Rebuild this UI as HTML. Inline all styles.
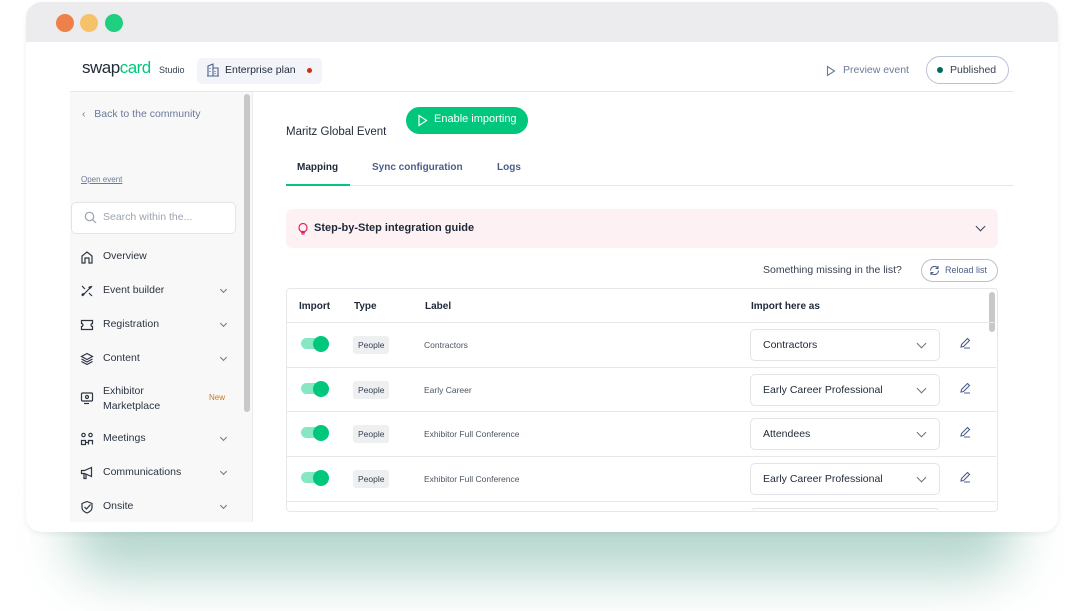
<!DOCTYPE html>
<html><head><style>
*{box-sizing:border-box;margin:0;padding:0}
body{width:1085px;height:611px;background:#fff;font-family:"Liberation Sans",sans-serif;position:relative;overflow:hidden;color:#1f2937}
.shadow{position:absolute;left:70px;top:480px;width:945px;height:95px;border-radius:40px;background:#a9cfc5;filter:blur(26px);opacity:.85}
.win{position:absolute;left:26px;top:2px;width:1032px;height:530px;background:#fff;border-radius:16px;overflow:hidden;box-shadow:0 2px 6px rgba(0,0,0,.06)}
.bar{height:40px;background:#ececee}
.dot{position:absolute;top:12px;width:18px;height:18px;border-radius:50%}
.a{position:absolute}
.t{position:absolute;white-space:nowrap}
.side{position:absolute;left:44px;top:90px;width:182px;height:430px;background:#f8f8f9}
.nav{position:absolute;left:77px;font-size:10.5px;color:#2b3441}
.chev{position:absolute;left:195px;width:5px;height:5px;border-right:1.1px solid #6b7280;border-bottom:1.1px solid #6b7280;transform:rotate(45deg)}
.row{position:absolute;left:260px;width:710px;border-top:1px solid #e5e7eb;height:45px}
.tog{position:absolute;left:15px;top:15px;width:26px;height:11px;border-radius:6px;background:#86e8c2}
.tog:after{content:"";position:absolute;right:-2px;top:-2.5px;width:16px;height:16px;border-radius:50%;background:#00c77c}
.pill{position:absolute;left:67px;top:13px;padding:4px 5px;background:#eeeff1;border-radius:3px;font-size:8.5px;color:#374151}
.lbl{position:absolute;left:138px;top:17px;font-size:8.5px;color:#4b5563}
.sel{position:absolute;left:464px;top:6px;width:190px;height:32px;border:1px solid #e2e4e8;border-radius:5px;font-size:10.5px;padding:9px 12px;color:#1f2937}
.sel:after{content:"";position:absolute;right:14px;top:10px;width:6px;height:6px;border-right:1.1px solid #6b7280;border-bottom:1.1px solid #6b7280;transform:rotate(45deg)}
.pen{position:absolute;left:673px;top:14px}
</style></head><body>
<div class="shadow"></div>
<div class="win">
<div class="bar"></div>
<div class="dot" style="left:30px;background:#ee8149"></div>
<div class="dot" style="left:54px;background:#f5c26a"></div>
<div class="dot" style="left:79px;background:#1fcf7f"></div>

<div class="t" style="left:56px;top:56px;font-size:17px;color:#1f2a37;letter-spacing:-.5px">swap<span style="color:#00c77c">card</span></div>
<div class="t" style="left:133px;top:63px;font-size:9px;color:#374151">Studio</div>
<div class="a" style="left:171px;top:56px;width:125px;height:26px;background:#f3f4f9;border-radius:5px"></div>
<svg class="a" style="left:180px;top:61px" width="14" height="14" viewBox="0 0 14 14" fill="none" stroke="#4b5e8a" stroke-width="1.1"><path d="M2 13V3l5-2v12M7 5h5v8M1 13h12M4 5v1M4 8v1M9 8v1M9 10v1"/></svg>
<div class="t" style="left:199px;top:62px;font-size:10.5px;color:#1f2937">Enterprise plan</div>
<div class="a" style="left:281px;top:66px;width:5px;height:5px;border-radius:50%;background:#d12e10"></div>

<svg class="a" style="left:800px;top:63px" width="10" height="12" viewBox="0 0 10 12" fill="none" stroke="#6b7a99" stroke-width="1.1"><path d="M1.5 1.5v9l7-4.5z"/></svg>
<div class="t" style="left:817px;top:62px;font-size:10.5px;color:#6b7a99">Preview event</div>
<div class="a" style="left:900px;top:54px;width:83px;height:28px;border:1px solid #b9c1d6;border-radius:14px"></div>
<div class="a" style="left:911px;top:65px;width:6px;height:6px;border-radius:50%;background:#006b5a"></div>
<div class="t" style="left:924px;top:62px;font-size:10.5px;color:#374151">Published</div>
<div class="a" style="left:44px;top:89px;width:944px;height:1px;background:#e5e7eb"></div>

<div class="side"></div>
<div class="a" style="left:218px;top:92px;width:6px;height:318px;background:#c8c8ca;border-radius:3px"></div>
<div class="a" style="left:226px;top:90px;width:1px;height:430px;background:#ececec"></div>
<div class="t" style="left:56px;top:106px;font-size:10.5px;color:#6b7a99">‹&nbsp;&nbsp; Back to the community</div>
<div class="t" style="left:55px;top:173px;font-size:8px;color:#6b7a99;text-decoration:underline">Open event</div>
<div class="a" style="left:45px;top:200px;width:165px;height:32px;background:#fff;border:1px solid #e2e4e8;border-radius:5px"></div>
<svg class="a" style="left:58px;top:209px" width="13" height="13" viewBox="0 0 13 13" fill="none" stroke="#9ca3af" stroke-width="1.2"><circle cx="5.5" cy="5.5" r="4.2"/><path d="M8.7 8.7l3.3 3.3"/></svg>
<div class="t" style="left:77px;top:209px;font-size:10.5px;color:#9ca3af">Search within the...</div>

<svg class="a" style="left:54px;top:248px" width="14" height="14" viewBox="0 0 14 14" fill="none" stroke="#2b3441" stroke-width="1.2"><path d="M2 13V6l5-4 5 4v7h-3V8H5v5z"/></svg>
<div class="nav" style="top:248px">Overview</div>
<svg class="a" style="left:54px;top:282px" width="14" height="14" viewBox="0 0 14 14" fill="none" stroke="#2b3441" stroke-width="1.2"><path d="M2 12L12 2M2 2l3 3M9 9l3 3M10 2v3M8.5 3.5h3M3 9v3M1.5 10.5h3"/></svg>
<div class="nav" style="top:282px">Event builder</div><div class="chev" style="top:285px"></div>
<svg class="a" style="left:54px;top:316px" width="14" height="14" viewBox="0 0 14 14" fill="none" stroke="#2b3441" stroke-width="1.2"><path d="M1.5 2.5h11v3a1.5 1.5 0 000 3v3h-11v-3a1.5 1.5 0 000-3z"/></svg>
<div class="nav" style="top:316px">Registration</div><div class="chev" style="top:319px"></div>
<svg class="a" style="left:54px;top:350px" width="14" height="14" viewBox="0 0 14 14" fill="none" stroke="#2b3441" stroke-width="1.2"><path d="M7 1.5l5.5 3-5.5 3-5.5-3zM1.5 7l5.5 3 5.5-3M1.5 9.5l5.5 3 5.5-3"/></svg>
<div class="nav" style="top:350px">Content</div><div class="chev" style="top:353px"></div>
<svg class="a" style="left:54px;top:389px" width="14" height="14" viewBox="0 0 14 14" fill="none" stroke="#2b3441" stroke-width="1.2"><rect x="1.5" y="2" width="11" height="8" rx="1"/><circle cx="7" cy="6" r="1.5"/><path d="M4 12.5h5"/></svg>
<div class="nav" style="top:382px;line-height:15px">Exhibitor<br>Marketplace</div>
<div class="t" style="left:183px;top:391px;font-size:8px;color:#c9781a">New</div>
<svg class="a" style="left:54px;top:430px" width="14" height="14" viewBox="0 0 14 14" fill="none" stroke="#2b3441" stroke-width="1.2"><circle cx="3.5" cy="3" r="1.7"/><circle cx="10.5" cy="3" r="1.7"/><path d="M1.5 12.5v-4h4v4zM8.5 12.5v-4h4v4M5.5 10.5h3"/></svg>
<div class="nav" style="top:430px">Meetings</div><div class="chev" style="top:433px"></div>
<svg class="a" style="left:54px;top:464px" width="14" height="14" viewBox="0 0 14 14" fill="none" stroke="#2b3441" stroke-width="1.2"><path d="M1.5 4.5h3l7-3v9l-7-3h-3zM4 7.5v5h2v-5"/></svg>
<div class="nav" style="top:464px">Communications</div><div class="chev" style="top:467px"></div>
<svg class="a" style="left:54px;top:498px" width="14" height="14" viewBox="0 0 14 14" fill="none" stroke="#2b3441" stroke-width="1.2"><path d="M7 1.5l5 2v4c0 3-2.5 4.5-5 5.5-2.5-1-5-2.5-5-5.5v-4zM4.5 7l2 2 4-4.5"/></svg>
<div class="nav" style="top:498px">Onsite</div><div class="chev" style="top:501px"></div>

<div class="t" style="left:260px;top:124px;font-size:11.5px;color:#1f2937">Maritz Global Event</div>
<div class="a" style="left:380px;top:105px;width:122px;height:27px;border-radius:14px;background:#00c77c"></div>
<svg class="a" style="left:391px;top:112px" width="11" height="13" viewBox="0 0 11 13" fill="none" stroke="#fff" stroke-width="1.2"><path d="M2 1.5v10l7.5-5z"/></svg>
<div class="t" style="left:408px;top:111px;font-size:11px;color:#fff">Enable importing</div>
<div class="t" style="left:271px;top:160px;font-size:10px;font-weight:bold;color:#1f2937">Mapping</div>
<div class="t" style="left:346px;top:160px;font-size:10px;font-weight:bold;color:#4b5e8a">Sync configuration</div>
<div class="t" style="left:471px;top:160px;font-size:10px;font-weight:bold;color:#4b5e8a">Logs</div>
<div class="a" style="left:260px;top:183px;width:728px;height:1px;background:#e5e7eb"></div>
<div class="a" style="left:260px;top:182px;width:64px;height:2px;background:#00c77c"></div>

<div class="a" style="left:260px;top:207px;width:712px;height:39px;background:#fdf1f4;border-radius:6px"></div>
<svg class="a" style="left:272px;top:221px" width="10" height="12" viewBox="0 0 10 12" fill="none" stroke="#e0246a" stroke-width="1.2"><path d="M3 9.5h4M3.5 11h3M3 8.5C1 7 1 5.5 1 4.5a4 4 0 018 0c0 1-0 2.5-2 4z"/></svg>
<div class="t" style="left:288px;top:220px;font-size:11px;font-weight:bold;color:#1f2937">Step-by-Step integration guide</div>
<div class="a" style="left:951px;top:221px;width:7px;height:7px;border-right:1.3px solid #374151;border-bottom:1.3px solid #374151;transform:rotate(45deg)"></div>

<div class="t" style="left:737px;top:262px;font-size:10.5px;color:#374151">Something missing in the list?</div>
<div class="a" style="left:895px;top:257px;width:77px;height:23px;border:1px solid #b9c1d6;border-radius:12px"></div>
<svg class="a" style="left:903px;top:263px" width="11" height="11" viewBox="0 0 11 11" fill="none" stroke="#4b5e8a" stroke-width="1.1"><path d="M9.5 5.5a4 4 0 01-7.5 2M1.5 5.5a4 4 0 017.5-2M9 1v2.5H6.5M2 10V7.5h2.5"/></svg>
<div class="t" style="left:919px;top:263px;font-size:9px;color:#4b5e8a">Reload list</div>

<div class="a" style="left:260px;top:286px;width:712px;height:224px;border:1px solid #e5e7eb;border-radius:4px;overflow:hidden">
<div style="position:absolute;right:2px;top:3px;width:6px;height:40px;border-radius:3px;background:#c8c8ca"></div>
<div class="t" style="left:12px;top:12px;font-size:10px;font-weight:bold">Import</div>
<div class="t" style="left:67px;top:12px;font-size:10px;font-weight:bold">Type</div>
<div class="t" style="left:138px;top:12px;font-size:10px;font-weight:bold">Label</div>
<div class="t" style="left:464px;top:12px;font-size:10px;font-weight:bold">Import here as</div>
</div>
<div class="row" style="top:320px"><div class="tog"></div><div class="pill">People</div><div class="lbl">Contractors</div><div class="sel">Contractors</div><svg class="pen" width="12" height="12" viewBox="0 0 12 12" fill="none" stroke="#4b5e8a" stroke-width="1.1"><path d="M2 10l.5-2.5 6-6 2 2-6 6zM5 11h6"/></svg></div>
<div class="row" style="top:365px"><div class="tog"></div><div class="pill">People</div><div class="lbl">Early Career</div><div class="sel">Early Career Professional</div><svg class="pen" width="12" height="12" viewBox="0 0 12 12" fill="none" stroke="#4b5e8a" stroke-width="1.1"><path d="M2 10l.5-2.5 6-6 2 2-6 6zM5 11h6"/></svg></div>
<div class="row" style="top:409px"><div class="tog"></div><div class="pill">People</div><div class="lbl">Exhibitor Full Conference</div><div class="sel">Attendees</div><svg class="pen" width="12" height="12" viewBox="0 0 12 12" fill="none" stroke="#4b5e8a" stroke-width="1.1"><path d="M2 10l.5-2.5 6-6 2 2-6 6zM5 11h6"/></svg></div>
<div class="row" style="top:454px"><div class="tog"></div><div class="pill">People</div><div class="lbl">Exhibitor Full Conference</div><div class="sel">Early Career Professional</div><svg class="pen" width="12" height="12" viewBox="0 0 12 12" fill="none" stroke="#4b5e8a" stroke-width="1.1"><path d="M2 10l.5-2.5 6-6 2 2-6 6zM5 11h6"/></svg></div>
<div class="row" style="top:499px;height:9px;overflow:hidden"><div style="position:absolute;left:464px;top:6px;width:190px;height:20px;border:1px solid #e2e4e8;border-radius:5px"></div></div>
</div>
</body></html>
